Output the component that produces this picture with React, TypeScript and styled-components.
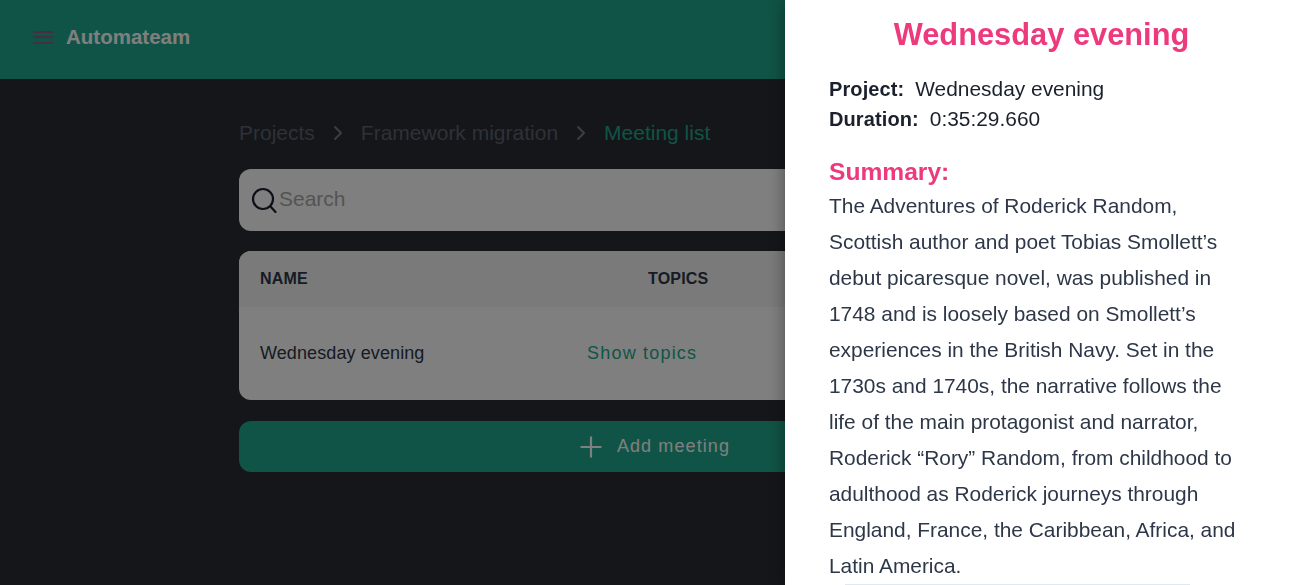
import React, { FC } from 'react';
import styled, { createGlobalStyle } from 'styled-components';
import { ChevronRight } from 'lucide-react';

const GlobalStyle = createGlobalStyle`
  html, body {
    margin: 0;
    height: 100%;
    overflow: hidden;
    background: #282c34;
    font-family: "Liberation Sans", Arial, sans-serif;
  }
`;

const Page = styled.div`
  width: 1298px;
  height: 585px;
  display: flex;
  flex-direction: column;
  overflow: hidden;
`;

const Header = styled.header`
  height: 79px;
  box-sizing: border-box;
  padding: 0 0 5px 33px;
  flex-shrink: 0;
  background: #1fa98c;
  display: flex;
  align-items: center;
  gap: 13px;
`;

const MenuIcon = styled.div`
  width: 20px;
  height: 13px;
  display: flex;
  flex-direction: column;
  justify-content: space-between;
  span {
    height: 2px;
    background: #8f5f7c;
  }
`;

const Brand = styled.div`
  color: #fff;
  font-size: 20.5px;
  font-weight: 700;
`;

const Content = styled.main`
  width: 832px;
  margin-left: 239px;
  padding-top: 40px;
  display: flex;
  flex-direction: column;
`;

const Breadcrumbs = styled.nav`
  height: 28px;
  display: flex;
  align-items: center;
  gap: 11px;
  font-size: 21px;
  svg {
    color: #757b86;
  }
`;

const Crumb = styled.span<{ $active?: boolean }>`
  color: ${(p) => (p.$active ? '#1fa98c' : '#5c6370')};
`;

const SearchBox = styled.div`
  margin-top: 22px;
  height: 62px;
  box-sizing: border-box;
  padding: 0 0 2px 12px;
  background: #fff;
  border-radius: 12px;
  display: flex;
  align-items: center;
  font-size: 21px;
  color: #a9a9a9;
`;

const Table = styled.div`
  margin-top: 20px;
  height: 149px;
  background: #fff;
  border-radius: 12px;
  overflow: hidden;
`;

const TableHead = styled.div`
  height: 56px;
  box-sizing: border-box;
  padding: 0 0 1px 21px;
  background: #f4f5f7;
  display: grid;
  grid-template-columns: 327px 220px;
  align-items: center;
  font-size: 16px;
  font-weight: 700;
  letter-spacing: 0.2px;
  color: #2d3748;
`;

const TopicsHead = styled.span`
  margin-left: 61px;
`;

const TableRow = styled.div`
  height: 93px;
  display: grid;
  grid-template-columns: 327px 220px;
  align-items: center;
  padding-left: 21px;
  font-size: 18px;
  letter-spacing: 0.1px;
  color: #2d3748;
`;

const TopicsLink = styled.span`
  color: #1fa98c;
  letter-spacing: 1.2px;
`;

const AddButton = styled.div`
  margin-top: 21px;
  height: 51px;
  background: #1fa98c;
  border-radius: 12px;
  display: flex;
  align-items: center;
  justify-content: center;
  gap: 15px;
  color: #fff;
  font-size: 18px;
  letter-spacing: 1.1px;
`;

const Backdrop = styled.div`
  position: fixed;
  inset: 0;
  background: rgba(0, 0, 0, 0.5);
`;

const Drawer = styled.aside`
  position: fixed;
  top: 0;
  right: 0;
  bottom: 0;
  width: 513px;
  box-sizing: border-box;
  padding: 17px 44px 0;
  background: #fff;
  box-shadow: 0 0 16px rgba(0, 0, 0, 0.4);
  color: #1a202c;
  overflow: hidden;
`;

const DrawerTitle = styled.h1`
  margin: 0 0 21px;
  font-size: 30.8px;
  line-height: 36px;
  font-weight: 700;
  text-align: center;
  color: #ed3a7c;
`;

const MetaRow = styled.div`
  height: 30px;
  display: flex;
  align-items: center;
  gap: 11px;
  font-size: 20.9px;
`;

const MetaLabel = styled.strong`
  font-size: 20px;
  font-weight: 700;
  letter-spacing: 0.1px;
`;

const SummaryTitle = styled.h2`
  margin: 23px 0 0;
  font-size: 24.6px;
  line-height: 30px;
  font-weight: 700;
  color: #ed3a7c;
`;

const SummaryText = styled.p`
  margin: 1px 0 0;
  width: 415px;
  font-size: 20.9px;
  line-height: 36px;
  color: #2d3748;
`;

const DrawerRule = styled.div`
  position: absolute;
  left: 60px;
  bottom: 0;
  width: 345px;
  height: 1px;
  background: #e2e8f0;
`;

const SearchIcon: FC = () => (
  <svg width="28" height="28" viewBox="0 0 28 28" fill="none" stroke="#1a202c" strokeWidth="2.2" strokeLinecap="round">
    <circle cx="12" cy="14" r="10" />
    <path d="M19.5 21.5L24.5 27" />
  </svg>
);

const PlusIcon: FC = () => (
  <svg width="22" height="22" viewBox="0 0 22 22" fill="none" stroke="currentColor" strokeWidth="2.2">
    <path d="M11 0.5V21.5M0.5 11H21.5" />
  </svg>
);

const App: FC = () => (
  <>
    <GlobalStyle />
    <Page>
      <Header>
        <MenuIcon>
          <span />
          <span />
          <span />
        </MenuIcon>
        <Brand>Automateam</Brand>
      </Header>
      <Content>
        <Breadcrumbs>
          <Crumb>Projects</Crumb>
          <ChevronRight size={24} strokeWidth={2} />
          <Crumb>Framework migration</Crumb>
          <ChevronRight size={24} strokeWidth={2} />
          <Crumb $active>Meeting list</Crumb>
        </Breadcrumbs>
        <SearchBox>
          <SearchIcon />
          Search
        </SearchBox>
        <Table>
          <TableHead>
            <span>NAME</span>
            <TopicsHead>TOPICS</TopicsHead>
          </TableHead>
          <TableRow>
            <span>Wednesday evening</span>
            <TopicsLink>Show topics</TopicsLink>
          </TableRow>
        </Table>
        <AddButton>
          <PlusIcon />
          Add meeting
        </AddButton>
      </Content>
    </Page>
    <Backdrop />
    <Drawer>
      <DrawerTitle>Wednesday evening</DrawerTitle>
      <MetaRow>
        <MetaLabel>Project:</MetaLabel>
        Wednesday evening
      </MetaRow>
      <MetaRow>
        <MetaLabel>Duration:</MetaLabel>
        0:35:29.660
      </MetaRow>
      <SummaryTitle>Summary:</SummaryTitle>
      <SummaryText>
        The Adventures of Roderick Random, Scottish author and poet Tobias Smollett’s debut picaresque novel, was
        published in 1748 and is loosely based on Smollett’s experiences in the British Navy. Set in the 1730s and
        1740s, the narrative follows the life of the main protagonist and narrator, Roderick “Rory” Random, from
        childhood to adulthood as Roderick journeys through England, France, the Caribbean, Africa, and Latin America.
      </SummaryText>
      <DrawerRule />
    </Drawer>
  </>
);

export default App;
